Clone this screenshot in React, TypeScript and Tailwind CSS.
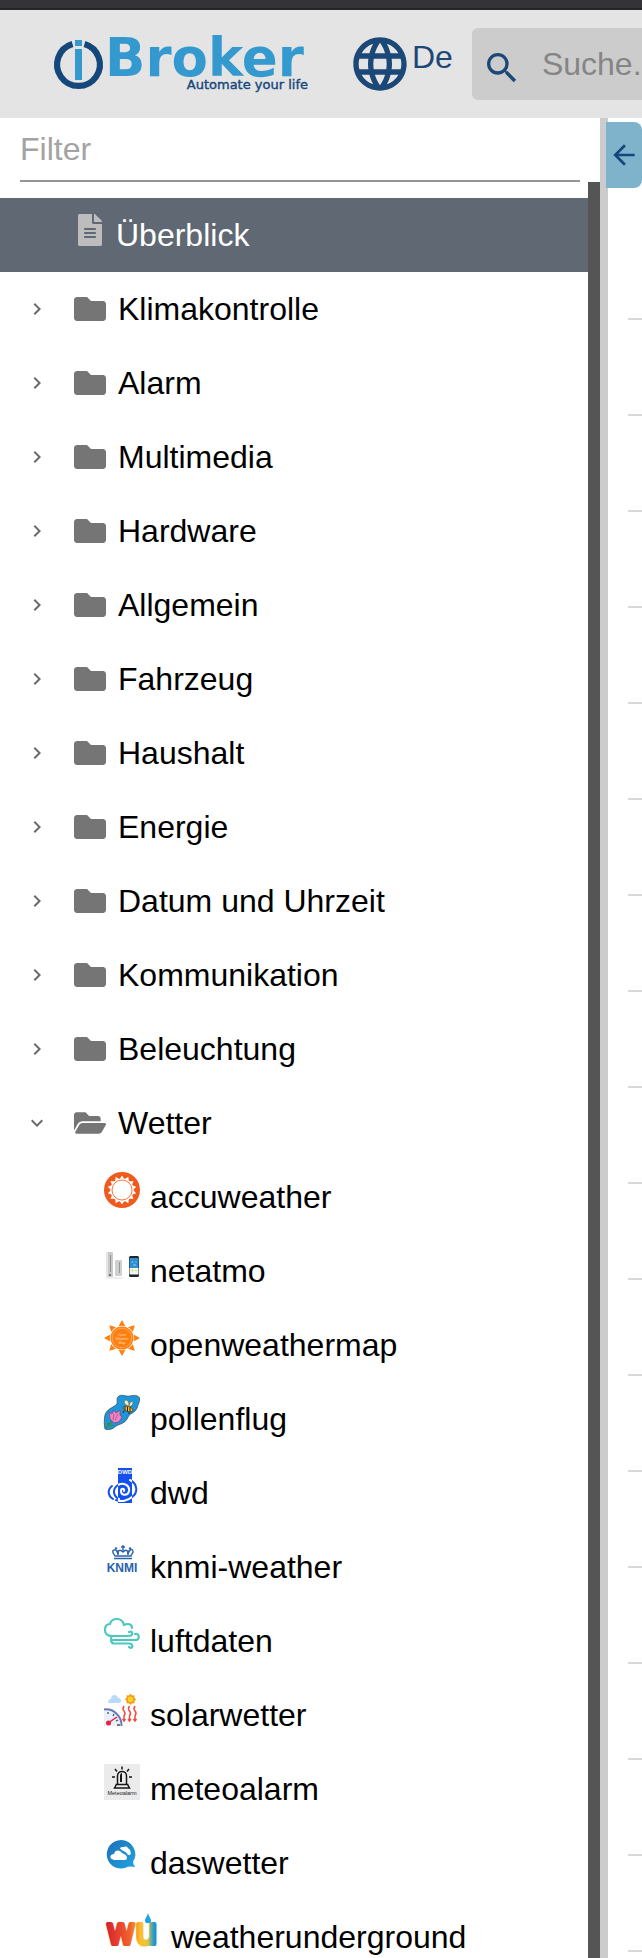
import React from 'react';
import { FaFileAlt, FaFolder, FaFolderOpen } from 'react-icons/fa';
import { MdArrowBack, MdChevronRight, MdExpandMore, MdLanguage, MdSearch } from 'react-icons/md';

const star = (count: number, outer: number, inner: number) =>
  Array.from({ length: count * 2 }, (_, i) => {
    const r = i % 2 ? inner : outer;
    const a = (i * Math.PI) / count - Math.PI / 2;
    return `${(18 + r * Math.cos(a)).toFixed(2)},${(18 + r * Math.sin(a)).toFixed(2)}`;
  }).join(' ');

interface AdapterIconProps {
  children: React.ReactNode;
}

const AdapterIcon = ({ children }: AdapterIconProps) => (
  <svg viewBox="0 0 36 36" className="h-9 w-9 shrink-0 overflow-visible" aria-hidden="true">
    {children}
  </svg>
);

const AccuweatherIcon = () => (
  <AdapterIcon>
    <circle cx="18" cy="18" r="18" fill="#f05a1c" />
    <polygon points={star(14, 14.6, 11)} fill="#fff" />
    <circle cx="18" cy="18" r="11.600" fill="#fff" />
    <circle cx="18" cy="18" r="10" fill="none" stroke="#f3783f" strokeWidth="1" />
  </AdapterIcon>
);

const NetatmoIcon = () => (
  <AdapterIcon>
    <path d="M1 31h19l-2 2H3z" fill="#eee" />
    <rect x="2" y="6" width="7" height="25" rx="1" fill="#c9cbca" />
    <rect x="2" y="6" width="2" height="25" fill="#e4e5e4" />
    <path d="M6.500 9v17" stroke="#8f9291" strokeWidth="1" />
    <path d="M5 29h2" stroke="#555" strokeWidth="1.500" />
    <rect x="11" y="14" width="7" height="16" rx="1" fill="#cfd1d0" />
    <path d="M15.500 16v11" stroke="#959897" strokeWidth="1" />
    <rect x="25" y="10" width="10" height="21" rx="1.500" fill="#20252b" />
    <rect x="25.500" y="12" width="9" height="10" fill="#2d8fce" />
    <rect x="25.500" y="22" width="9" height="6.500" fill="#f3f6f0" />
    <path d="M27.500 16h2m2 0h1M29 19h3" stroke="#8fd0f2" strokeWidth="1" />
    <circle cx="28.500" cy="24.500" r="1" fill="#d8dc32" />
    <path d="M31 24.500h2" stroke="#b7d9a0" />
  </AdapterIcon>
);

const OpenWeatherMapIcon = () => (
  <AdapterIcon>
    {[0, 45, 90, 135, 180, 225, 270, 315].map((angle) => (
      <path key={angle} d="M18 0l3.600 6.400h-7.200z" fill="#ff7f0e" transform={`rotate(${angle} 18 18)`} />
    ))}
    <circle cx="18" cy="18" r="12.200" fill="#fff" />
    <circle cx="18" cy="18" r="11.500" fill="#ff7f0e" />
    <circle cx="18" cy="18" r="9.800" fill="none" stroke="#fbbd80" strokeWidth=".6" />
    <g fill="#ffdcbc" fontFamily="Liberation Sans" fontSize="3.500" textAnchor="middle">
      <text x="18" y="15.500">Open</text>
      <text x="18" y="19.500">Weather</text>
      <text x="18" y="23.500">Map</text>
    </g>
  </AdapterIcon>
);

const PollenflugIcon = () => (
  <AdapterIcon>
    <path
      d="M1 35C0 31 0 26 1 21C3 15 8 14 12 11C15 8 11 5 15 2C19 0 22 3 26 2C30 1 34 1 35.500 4C36 8 34 10 33 14C31 19 26 19 24 23C22 29 16 30 12 32C8 36 4 36 1 35z"
      fill="#1c96dc"
      stroke="#33505e"
      strokeWidth=".8"
    />
    <path d="M2 34L9 26M3 30l3-1M5 32l4-1" stroke="#3d8a4a" strokeWidth="1.500" />
    <path d="M6 25L5 18l3 2 2-4 2 3 4-3 0 5 2 2-3 5-5 1z" fill="#ee84c4" stroke="#7d3f70" strokeWidth=".7" />
    <path d="M9 26l1-6M11 26l3-6" stroke="#a3448a" strokeWidth=".7" />
    <path d="M24 12C19 10 20 6 22 6C25 7 25 9 25 12C25 8 29 6 29 9C29 11 27 12 25 13z" fill="#f2ecc5" stroke="#635c38" strokeWidth=".6" />
    <ellipse cx="24" cy="15" rx="5" ry="2.500" fill="#f3bd32" stroke="#2b2a1b" strokeWidth=".6" transform="rotate(15 24 15)" />
    <path d="M21 12.500v4M23.500 13v4.500M26 13.500v4M20 17l-1 2M25 18v2" stroke="#222" strokeWidth="1" />
  </AdapterIcon>
);

// The swirl is blue on white and turns white where it crosses the blue column
const DwdSwirl = ({ stroke }: { stroke: string }) => (
  <g fill="none" stroke={stroke} strokeWidth="2" strokeLinecap="round">
    <path d="M20 23C21 20 17 20 17 23C17 28 24 28 25 23C26 17 19 14 14 17C8 21 9 28 15 31" />
    <path d="M26 12C34 16 34 25 28 29C24 33 17 34 12 32" />
    <path d="M8 18C3 22 4 28 9 31" />
  </g>
);

const DwdIcon = () => (
  <AdapterIcon>
    <clipPath id="dwd-column">
      <rect x="14" y="8" width="14" height="27" />
    </clipPath>
    <DwdSwirl stroke="#1550ee" />
    <rect x="14" y="0" width="14" height="35" fill="#1550ee" />
    <g clipPath="url(#dwd-column)">
      <DwdSwirl stroke="#fff" />
    </g>
    <text x="21" y="6" fill="#fff" fontFamily="Liberation Sans" fontWeight="700" fontSize="6" textAnchor="middle">
      DWD
    </text>
  </AdapterIcon>
);

const KnmiIcon = () => (
  <AdapterIcon>
    <g fill="none" stroke="#2a62ad" strokeWidth="1.400">
      <path d="M10 16.500h18M11 14C10 12 7 9 10 8C13 7 13 10 14 12C14 8 16 7 19 10C22 7 24 8 24 12C25 8 28 6 29 9C30 11 27 12 27 14z" />
      <path d="M19 3v6M17 5h4M14 13V8M24 13V8" />
    </g>
    <g fill="#2a62ad">
      <circle cx="12" cy="6.500" r="1.200" />
      <circle cx="26" cy="6.500" r="1.200" />
    </g>
    <text x="18" y="30" fill="#2a62ad" fontFamily="Liberation Sans" fontWeight="700" fontSize="12" textAnchor="middle">
      KNMI
    </text>
  </AdapterIcon>
);

const LuftdatenIcon = () => (
  <AdapterIcon>
    <g fill="none" stroke="#4cc8c1" strokeWidth="2.200" strokeLinecap="round">
      <path d="M24 20H8C3 20 1 17 1 14C1 10 3 8 6 8C7 4 10 3 13 3C17 3 19 5 20 9C24 7 28 8 28 12" />
      <path d="M24 20C30 20 29 14 25 16" />
      <path d="M8 24h23C36 24 36 17 31 18M8 20C6 23 7 27.500 10 27.500h15C30 27.500 29 34 25 31" />
    </g>
  </AdapterIcon>
);

const SolarwetterIcon = () => (
  <AdapterIcon>
    <path d="M6 13C3 13 4 9 7 9C7 4 13 4 14 8C18 8 18 13 15 13z" fill="#b9d9fb" />
    <polygon points={star(8, 5.6, 4.2)} fill="#f59a12" transform="translate(8.500 -8.700)" />
    <circle cx="26.500" cy="9.300" r="2.800" fill="#fbd22b" />
    <path d="M0 20C9 19 17 26 17 36H0z" fill="#e9f0f8" />
    <path d="M0 19.500C9 18 18 26 17.500 36" fill="none" stroke="#6b75bd" strokeWidth="2" />
    <path d="M4 22v2M10 24l-1 2M14 30l-2 1M13 35h3" stroke="#46535d" strokeWidth="1.300" />
    <path d="M4 33l9-6" stroke="#e91e45" strokeWidth="1.500" />
    <circle cx="4.500" cy="33" r="2.500" fill="#e91e45" />
    {[20, 25.5, 31].map((x) => (
      <path key={x} d={`M${x} 16q-2 3 0 5t0 5v5m-1.500-2l1.500 2 1.500-2`} fill="none" stroke="#f04b41" strokeWidth="1.500" />
    ))}
  </AdapterIcon>
);

const MeteoalarmIcon = () => (
  <AdapterIcon>
    <rect width="36" height="36" fill="#ebebeb" />
    <g fill="none" stroke="#161616" strokeWidth="1.500">
      <path d="M13.500 20v-8C13.500 6 22.500 6 22.500 12v8M11.500 20.500h13M10.500 24h15l-2-3.500h-11z" />
      <path d="M18 2.500v3M11 5l2 2.500M25 5l-2 2.500M8 13h3M25 13h3" />
    </g>
    <path d="M16 18v-6C16 10 17 9 18 9v9z" fill="#161616" />
    <text x="18" y="31" fill="#222" fontFamily="Liberation Sans" fontSize="5.500" textAnchor="middle">
      Meteoalarm
    </text>
  </AdapterIcon>
);

const DaswetterIcon = () => (
  <AdapterIcon>
    <linearGradient id="daswetter-fill" x1="0" y1="0" x2="1" y2="1">
      <stop offset="0" stopColor="#1d6fb8" />
      <stop offset="1" stopColor="#21a3e0" />
    </linearGradient>
    <path d="M17 2A14.300 14.300 0 1 0 24 28.800Q27 28 31 29Q29 26 29 24A14.300 14.300 0 0 0 17 2z" fill="url(#daswetter-fill)" />
    <path d="M9 21.500C5 21 6 16 10 16C11 11.500 16 11.500 18 15C20 16 23 17 23 20C23 21 22 22 21 22H10z" fill="#fff" />
    <path d="M16 10.500C17 8 20 9.500 21 8.500C23 8 24 10 25 11C27 12 26 14 27 15C26 18 25 17 24 17C22 13 19 14 16 10.500z" fill="#fff" />
  </AdapterIcon>
);

const WeatherUndergroundIcon = () => (
  <svg viewBox="0 0 57 36" className="h-9 w-[57px] shrink-0 overflow-visible" aria-hidden="true">
    <linearGradient id="wu-fill" gradientUnits="userSpaceOnUse" x1="2" y1="0" x2="55" y2="0">
      <stop offset="0" stopColor="#d9202e" />
      <stop offset=".45" stopColor="#f0622c" />
      <stop offset=".65" stopColor="#fbbf2c" />
      <stop offset=".78" stopColor="#e9c53a" />
      <stop offset=".88" stopColor="#38a6c4" />
      <stop offset="1" stopColor="#1a65b2" />
    </linearGradient>
    <text
      x="28"
      y="32"
      fill="url(#wu-fill)"
      stroke="url(#wu-fill)"
      strokeWidth="4"
      strokeLinejoin="round"
      fontFamily="DejaVu Sans"
      fontSize="35"
      textAnchor="middle"
    >
      wu
    </text>
    <path d="M44 1C45 5 47 6 47 9C47 12 41 12 41 9C41 6 43 5 44 1z" fill="#1fa3dc" />
  </svg>
);

const folders = [
  'Klimakontrolle',
  'Alarm',
  'Multimedia',
  'Hardware',
  'Allgemein',
  'Fahrzeug',
  'Haushalt',
  'Energie',
  'Datum und Uhrzeit',
  'Kommunikation',
  'Beleuchtung',
];

const weatherAdapters = [
  { name: 'accuweather', Icon: AccuweatherIcon },
  { name: 'netatmo', Icon: NetatmoIcon },
  { name: 'openweathermap', Icon: OpenWeatherMapIcon },
  { name: 'pollenflug', Icon: PollenflugIcon },
  { name: 'dwd', Icon: DwdIcon },
  { name: 'knmi-weather', Icon: KnmiIcon },
  { name: 'luftdaten', Icon: LuftdatenIcon },
  { name: 'solarwetter', Icon: SolarwetterIcon },
  { name: 'meteoalarm', Icon: MeteoalarmIcon },
  { name: 'daswetter', Icon: DaswetterIcon },
  { name: 'weatherunderground', Icon: WeatherUndergroundIcon },
];

const Logo = () => (
  <svg viewBox="0 0 256 56" className="h-14 w-64 shrink-0 overflow-visible" role="img" aria-label="ioBroker">
    <path d="M18.500 8A21.400 21.400 0 1 0 30.500 8" fill="none" stroke="#14487c" strokeWidth="6.200" />
    <rect x="21" y="4" width="7" height="6" fill="#3399cf" />
    <rect x="21" y="13" width="7" height="31" fill="#3399cf" />
    <text x="51" y="40" fill="#3399cf" fontFamily="DejaVu Sans" fontWeight="700" fontSize="53">
      Broker
    </text>
    <text
      x="254"
      y="53"
      fill="#14487c"
      stroke="#14487c"
      strokeWidth=".4"
      fontFamily="DejaVu Sans"
      fontSize="13"
      textAnchor="end"
    >
      Automate your life
    </text>
  </svg>
);

interface FolderRowProps {
  name: string;
  open?: boolean;
}

const FolderRow = ({ name, open = false }: FolderRowProps) => {
  const Chevron = open ? MdExpandMore : MdChevronRight;
  const Folder = open ? FaFolderOpen : FaFolder;

  return (
    <button type="button" aria-expanded={open} className="flex h-[74px] w-full items-center pl-[25px] text-left">
      <Chevron size={24} className="shrink-0 text-[#6b6b6b]" />
      <Folder size={32} className="ml-[25px] shrink-0 text-[#757575]" />
      <span className="ml-3">{name}</span>
    </button>
  );
};

const Header = () => (
  <header className="flex h-[118px] shrink-0 items-start overflow-hidden border-t-8 border-[#343438] bg-[#e4e4e4] text-[#1c4878]">
    <div className="flex h-[110px] w-full items-start border-t-2 border-[#262628] pt-[18px]">
      <a href="#home" className="ml-[54px] mt-2 shrink-0">
        <Logo />
      </a>
      <button type="button" className="ml-[38px] flex shrink-0 items-start">
        <MdLanguage size={64} className="mt-1" />
        <span className="mt-[11px] leading-9">De</span>
      </button>
      <label className="ml-[19px] flex h-[72px] w-[400px] shrink-0 items-start rounded-md bg-[#cccccc]">
        <MdSearch size={40} className="ml-2.5 mt-5 shrink-0" />
        <input
          type="search"
          aria-label="Suche"
          placeholder="Suche..."
          className="ml-5 h-[72px] min-w-0 flex-1 bg-transparent outline-none placeholder:text-[#858585]"
        />
      </label>
    </div>
  </header>
);

const Sidebar = () => (
  <aside className="flex w-[600px] shrink-0 flex-col">
    <div className="px-5">
      <input
        type="text"
        aria-label="Filter"
        placeholder="Filter"
        className="h-16 w-full border-b-2 border-[#949494] outline-none placeholder:text-[#a3a3a3]"
      />
    </div>
    <div className="flex min-h-0 flex-1">
      <nav className="min-w-0 flex-1 overflow-hidden pt-4">
        <ul>
          <li>
            <a href="#overview" className="flex h-[74px] items-baseline gap-2.5 bg-[#5f6873] pl-[74px] leading-[74px] text-white">
              <FaFileAlt size={32} className="shrink-0 text-[#bdbdbd]" />
              <span>Überblick</span>
            </a>
          </li>
          {folders.map((name) => (
            <li key={name}>
              <FolderRow name={name} />
            </li>
          ))}
          <li>
            <FolderRow name="Wetter" open />
            <ul>
              {weatherAdapters.map(({ name, Icon }) => (
                <li key={name}>
                  <a href={`#${name}`} className="flex h-[74px] items-baseline gap-2.5 pl-[104px] leading-[74px]">
                    <Icon />
                    <span>{name}</span>
                  </a>
                </li>
              ))}
            </ul>
          </li>
        </ul>
      </nav>
      <div className="w-3 shrink-0 bg-[#555555]" />
    </div>
  </aside>
);

const Content = () => (
  <main className="relative -ml-0.5 min-w-0 flex-1 overflow-hidden pt-1">
    <button
      type="button"
      aria-label="Menü schließen"
      className="flex h-[66px] w-9 items-center justify-center rounded-r-lg bg-[#7fb3cc] text-[#14487c]"
    >
      <MdArrowBack size={32} className="shrink-0" />
    </button>
    <div className="ml-[22px] mt-9 rounded-tl-lg">
      {Array.from({ length: 19 }, (_, i) => (
        <div key={i} className="h-24 border-b-2 border-[#d9d9d9]" />
      ))}
    </div>
  </main>
);

const App = () => {
  return (
    <div className="flex h-screen flex-col overflow-hidden bg-white font-['Liberation_Sans',Arial,sans-serif] text-[32px] text-black">
      <Header />
      <div className="flex min-h-0 flex-1">
        <Sidebar />
        <div className="w-2 shrink-0 bg-[#cccccc]" />
        <Content />
      </div>
    </div>
  );
};

export default App;
